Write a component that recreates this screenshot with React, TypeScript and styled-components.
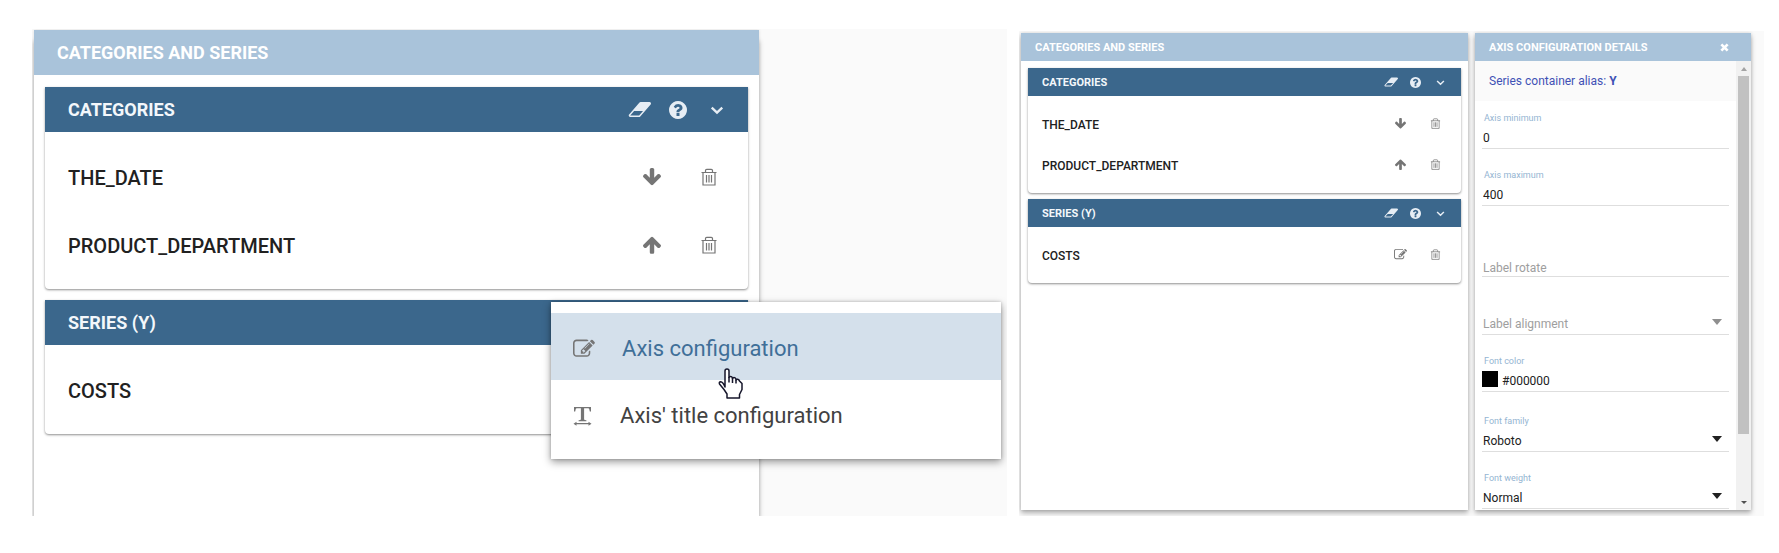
import React from 'react';
import styled, { createGlobalStyle, css } from 'styled-components';

type Size = 'large' | 'small';

const sizes = {
  large: {
    bar: 45, barPad: 23, title: 18, item: 20, row: 68, bodyTop: 11, bodyBottom: 10, pad: 11, gap: 11,
    figurePad: '1px 0 0 2px', panelHeight: 486,
    slot: 57, slotPad: 10, headGap: 39,
  },
  small: {
    bar: 28, barPad: 14, title: 11, item: 12, row: 41, bodyTop: 7, bodyBottom: 8, pad: 7, gap: 6,
    figurePad: '2px 13px 6px 2px', panelHeight: 477,
    slot: 35, slotPad: 8, headGap: 25,
  },
};

const Global = createGlobalStyle`
  *, *::before, *::after { box-sizing: border-box; }
  body { margin: 0; background: #fff; color: #212121; font-family: Roboto, "Liberation Sans", sans-serif; }
  button, input, select { font: inherit; color: inherit; }
`;

const Page = styled.main`
  display: grid;
  grid-template-columns: 975fr 745fr;
  gap: 12px;
  align-items: start;
  padding: 29px 15px 37px 32px;
`;

const Figure = styled.section<{ $size: Size }>`
  position: relative;
  display: flex;
  gap: 7px;
  padding: ${p => sizes[p.$size].figurePad};
  margin-top: ${p => (p.$size === 'small' ? 2 : 0)}px;
  background: #fafafa;
  overflow: hidden;
`;

const Panel = styled.div<{ $size: Size }>`
  flex: ${p => (p.$size === 'large' ? '0 0 74.5%' : '1')};
  min-width: 0;
  min-height: ${p => sizes[p.$size].panelHeight}px;
  background: #fff;
  box-shadow: 0 ${p => (p.$size === 'large' ? 11 : 3)}px 5px rgba(0, 0, 0, 0.3), 0 0 3px rgba(0, 0, 0, 0.12);
`;

const PanelBar = styled.header<{ $size: Size }>`
  display: flex;
  align-items: center;
  justify-content: space-between;
  height: ${p => sizes[p.$size].bar}px;
  padding: 0 ${p => sizes[p.$size].barPad}px;
  background: #a9c3da;
  color: #fff;
`;

const Title = styled.h2<{ $size: Size }>`
  margin: 0;
  font-size: ${p => sizes[p.$size].title}px;
  font-weight: 700;
  line-height: 1;
  white-space: nowrap;
`;

const Cards = styled.div<{ $size: Size }>`
  display: flex;
  flex-direction: column;
  gap: ${p => sizes[p.$size].gap}px;
  padding: ${p => sizes[p.$size].pad}px;
  padding-top: ${p => (p.$size === 'large' ? 12 : 7)}px;
`;

const CardBox = styled.article`
  position: relative;
  background: #fff;
  border-radius: 0 0 4px 4px;
  box-shadow: 0 1px 3px rgba(0, 0, 0, 0.22), 0 1px 2px rgba(0, 0, 0, 0.26);
`;

const CardBar = styled.header<{ $size: Size }>`
  display: flex;
  align-items: center;
  justify-content: space-between;
  height: ${p => sizes[p.$size].bar}px;
  padding: 0 ${p => (p.$size === 'large' ? 11 : 8)}px 0 ${p => sizes[p.$size].barPad}px;
  background: #3b678c;
  color: #f3f7fb;
`;

const Items = styled.ul<{ $size: Size }>`
  margin: 0;
  padding: ${p => sizes[p.$size].bodyTop}px ${p => sizes[p.$size].slotPad}px ${p => sizes[p.$size].bodyBottom}px ${p => sizes[p.$size].barPad}px;
  list-style: none;
`;

const Item = styled.li<{ $size: Size }>`
  display: flex;
  align-items: center;
  justify-content: space-between;
  height: ${p => sizes[p.$size].row}px;
  font-size: ${p => sizes[p.$size].item}px;
  font-weight: 500;
`;

const ItemName = styled.span`
  padding-top: 2px;
`;

const Actions = styled.div`
  display: flex;
  align-items: center;
`;

const IconButton = styled.button<{ $width: number; $color: string }>`
  display: flex;
  align-items: center;
  justify-content: center;
  width: ${p => p.$width}px;
  height: 28px;
  padding: 0;
  border: 0;
  background: none;
  color: ${p => p.$color};
  cursor: pointer;
`;

const Svg = styled.svg`
  display: block;
  fill: currentColor;
`;

const Menu = styled.div`
  position: absolute;
  top: 2px;
  left: 72%;
  width: 450px;
  padding: 11px 0 12px;
  background: #fff;
  box-shadow: 0 3px 8px rgba(0, 0, 0, 0.4), 0 0 3px rgba(0, 0, 0, 0.2);
  z-index: 1;
`;

const MenuItem = styled.button<{ $active?: boolean }>`
  display: flex;
  align-items: center;
  gap: 27px;
  width: 100%;
  height: 67px;
  padding: 4px 22px 0;
  border: 0;
  background: ${p => (p.$active ? '#d4e0eb' : '#fff')};
  color: ${p => (p.$active ? '#3f6f98' : '#424242')};
  font-size: 22px;
  text-align: left;
  cursor: pointer;

  svg { color: #757575; }
`;

const Pointer = styled.svg`
  position: absolute;
  top: 66px;
  left: 167px;
`;

const Details = styled.aside`
  display: flex;
  flex-direction: column;
  flex: 0 0 276px;
  height: 477px;
  background: #fff;
  box-shadow: 0 3px 5px rgba(0, 0, 0, 0.3), 0 0 3px rgba(0, 0, 0, 0.12);
`;

const DetailsBody = styled.div`
  display: flex;
  flex: 1;
  min-height: 0;
`;

const Form = styled.form`
  flex: 1;
  min-width: 0;
  overflow: hidden;
`;

const Alias = styled.p`
  display: flex;
  align-items: center;
  height: 40px;
  margin: 0 0 10px;
  padding: 0 14px;
  background: #fafafa;
  color: #3f51b5;
  font-size: 12px;
  white-space: pre;

  b { font-weight: 700; }
`;

const Field = styled.div<{ $height: number }>`
  display: flex;
  flex-direction: column;
  justify-content: flex-end;
  height: ${p => p.$height}px;
  margin: 0 7px;

  label {
    padding-left: 2px;
    color: #94b5d2;
    font-size: 9px;
    line-height: 12px;
  }
`;

const controlStyle = css`
  display: block;
  flex: 1;
  width: 100%;
  min-width: 0;
  height: 24px;
  padding: 3px 1px 0;
  border: 0;
  outline: 0;
  background: none;
  font-size: 12px;
`;

const Control = styled.div`
  display: flex;
  align-items: center;
  position: relative;
  border-bottom: 1px solid #dedede;
`;

const TextInput = styled.input<{ $compact?: boolean }>`
  ${controlStyle}
  ${p => p.$compact && 'height: 19px;'}
  &::placeholder { color: #9e9e9e; opacity: 1; }
`;

const Select = styled.select<{ $muted?: boolean }>`
  ${controlStyle}
  appearance: none;
  color: ${p => (p.$muted ? '#9e9e9e' : '#212121')};
`;

const Caret = styled.span<{ $muted?: boolean }>`
  position: absolute;
  right: 7px;
  border: solid transparent;
  border-width: 6px 5px 0;
  border-top-color: ${p => (p.$muted ? '#8f8f8f' : '#212121')};
  pointer-events: none;
`;

const Swatch = styled.span`
  width: 16px;
  height: 16px;
  margin-right: 3px;
  background: #000;
`;

const ScrollTrack = styled.div`
  display: flex;
  flex-direction: column;
  align-items: center;
  justify-content: space-between;
  width: 15px;
  padding: 6px 0;
  background: #f1f1f1;
`;

const Thumb = styled.div`
  flex: 0 0 358px;
  width: 11px;
  margin: 5px 0 auto;
  background: #c1c1c1;
`;

const ScrollArrow = styled.span<{ $down?: boolean }>`
  border: 3px solid transparent;
  ${p => (p.$down
    ? 'border-bottom-width: 0; border-top-color: #505050;'
    : 'border-top-width: 0; border-bottom-color: #a3a3a3; border-bottom-width: 4px;')}
`;

const paths = {
  help: 'M1024 1376v-192q0-14-9-23t-23-9h-192q-14 0-23 9t-9 23v192q0 14 9 23t23 9h192q14 0 23-9t9-23zm256-672q0-88-55.5-163t-138.5-116-170-41q-243 0-371 213-15 24 8 42l132 100q7 6 19 6 16 0 25-12 53-68 86-92 34-24 86-24 48 0 85.5 26t37.5 59q0 38-20 61t-68 45q-63 28-115.5 86.5t-52.5 125.5v36q0 14 9 23t23 9h192q14 0 23-9t9-23q0-19 21.5-49.5t54.5-49.5q32-18 49-28.5t46-35 44.5-48 28-60.5 12.5-81zm384 192q0 209-103 385.5t-279.5 279.5-385.5 103-385.5-103-279.5-279.5-103-385.5 103-385.5 279.5-279.5 385.5-103 385.5 103 279.5 279.5 103 385.5z',
  eraser: 'M960 1408l336-384h-768l-336 384h768zm1013-1077q15 34 9.5 71.5t-30.5 65.5l-896 1024q-38 44-96 44h-768q-38 0-69.5-20.5t-47.5-54.5q-15-34-9.5-71.5t30.5-65.5l896-1024q38-44 96-44h768q38 0 69.5 20.5t47.5 54.5z',
  edit: 'M888 1184l116-116-152-152-116 116v56h96v96h56zm440-720q-16-16-33 1l-350 350q-17 17-1 33t33-1l350-350q17-17 1-33zm80 594v190q0 119-84.5 203.5t-203.5 84.5h-832q-119 0-203.5-84.5t-84.5-203.5v-832q0-119 84.5-203.5t203.5-84.5h832q63 0 117 25 15 7 18 23 3 17-9 29l-49 49q-14 14-32 8-23-6-45-6h-832q-66 0-113 47t-47 113v832q0 66 47 113t113 47h832q66 0 113-47t47-113v-126q0-13 9-22l64-64q15-15 35-7t20 29zm-96-738l288 288-672 672h-288v-288zm444 132l-92 92-288-288 92-92q28-28 68-28t68 28l152 152q28 28 28 68t-28 68z',
  down: 'M1675 832q0 53-37 90l-651 652q-39 37-91 37-53 0-90-37l-651-652q-38-36-38-90 0-53 38-91l74-75q39-37 91-37 53 0 90 37l294 294v-704q0-52 38-90t90-38h128q52 0 90 38t38 90v704l294-294q37-37 90-37 52 0 91 37l75 75q37 39 37 91z',
};

const Eraser = ({ width }: { width: number }) => (
  <Svg width={width} height={width} viewBox="0 -96 1984 1984" aria-hidden><path d={paths.eraser} /></Svg>
);
const Help = ({ width }: { width: number }) => (
  <Svg width={width} height={width} viewBox="128 128 1536 1536" aria-hidden><path d={paths.help} /></Svg>
);
const Chevron = ({ width }: { width: number }) => (
  <Svg width={width} height={width} viewBox="0 0 12 12" aria-hidden>
    <path d="M1.500 4L6 8.300L10.500 4" fill="none" stroke="currentColor" strokeWidth="2" />
  </Svg>
);
const Edit = ({ width }: { width: number }) => (
  <Svg width={width} height={width} viewBox="0 0 1792 1792" aria-hidden><path d={paths.edit} /></Svg>
);
const Arrow = ({ width, up }: { width: number; up?: boolean }) => (
  <Svg width={width} height={width} viewBox="117 119 1558 1558" aria-hidden>
    <path d={paths.down} transform={up ? 'rotate(180 896 896)' : undefined} />
  </Svg>
);
const Trash = ({ width }: { width: number }) => (
  <Svg width={width} height={width} viewBox="0 0 18 18" aria-hidden>
    <path
      d="M1.500 4.500h15M5.500 4.500V2.500q0-1.200 1.200-1.200h4.600q1.200 0 1.200 1.200v2M3 4.500v12.500h12V4.500M6.500 7v7.500M9 7v7.500M11.500 7v7.500"
      fill="none" stroke="currentColor" strokeWidth="1.200"
    />
  </Svg>
);
const TitleIcon = () => (
  <Svg width="20" height="20" viewBox="0 0 20 20" aria-hidden>
    <path d="M1 1h17v4.500h-1.200l-.6-2.500q-.2-.7-1-.7h-4.100v10.900q0 .8 2.300 1v1H5.600v-1q2.300-.2 2.300-1V2.300H3.800q-.8 0-1 .7l-.6 2.500H1z" />
    <path d="M.5 17.700l3-2v1.400h12v-1.400l3 2-3 2v-1.400h-12v1.400z" />
  </Svg>
);
const Close = () => (
  <Svg width="9" height="9" viewBox="0 0 10 10" aria-hidden>
    <path d="M1.500 1.500l7 7M8.500 1.500l-7 7" stroke="currentColor" strokeWidth="3" />
  </Svg>
);

function HandPointer() {
  return (
    <Pointer width="25" height="32" viewBox="0 0 25 32" aria-hidden>
      <path
        d="M7 19V3q0-2 2-2t2 2v6.500q0-1 1.500-1t2 1.500v.5q.3-1 1.500-1t2 1.500v1q.3-1 1.700-.700t1.800 1.700l2.500 2.500v6l-2.500 5v3.500H9V26l-3-4.500L1.500 16q-.8-2 1.200-2.200Q5 14 7 19z"
        fill="#fff" stroke="#16162b" strokeWidth="1.500" strokeLinejoin="round"
      />
      <path d="M11 9v5.500M14.500 10v5M18 11.500v4" stroke="#16162b" strokeWidth="1.500" />
    </Pointer>
  );
}

type Entry = { name: string; action: 'down' | 'up' | 'edit' | 'none' };

function Card({ title, size, entries, children }: {
  title: string; size: Size; entries: Entry[]; children?: React.ReactNode;
}) {
  const s = sizes[size];
  const large = size === 'large';
  return (
    <CardBox>
      <CardBar $size={size}>
        <Title $size={size}>{title}</Title>
        <Actions>
          <IconButton type="button" $width={s.headGap} $color="#e6edf4" aria-label={`Clear ${title}`}>
            <Eraser width={large ? 23 : 14} />
          </IconButton>
          <IconButton type="button" $width={s.headGap} $color="#e6edf4" aria-label={`Help on ${title}`}>
            <Help width={large ? 18 : 11} />
          </IconButton>
          <IconButton type="button" $width={s.headGap} $color="#e6edf4" aria-label={`Collapse ${title}`}>
            <Chevron width={large ? 14 : 9} />
          </IconButton>
        </Actions>
      </CardBar>
      <Items $size={size}>
        {entries.map(e => (
          <Item key={e.name} $size={size}>
            <ItemName>{e.name}</ItemName>
            <Actions>
              {e.action !== 'none' && (
                <IconButton type="button" $width={s.slot} $color="#757575"
                  aria-label={e.action === 'edit' ? `Edit ${e.name}` : `Move ${e.name} ${e.action}`}>
                  {e.action === 'edit' ? <Edit width={13} /> : <Arrow width={large ? 18 : 11} up={e.action === 'up'} />}
                </IconButton>
              )}
              <IconButton type="button" $width={s.slot} $color="#757575" aria-label={`Remove ${e.name}`}>
                <Trash width={large ? 18 : 11} />
              </IconButton>
            </Actions>
          </Item>
        ))}
      </Items>
      {children}
    </CardBox>
  );
}

const categories: Entry[] = [
  { name: 'THE_DATE', action: 'down' },
  { name: 'PRODUCT_DEPARTMENT', action: 'up' },
];

function SeriesPanel({ size, costs, menu }: { size: Size; costs: Entry['action']; menu?: React.ReactNode }) {
  return (
    <Panel $size={size}>
      <PanelBar $size={size}><Title $size={size}>CATEGORIES AND SERIES</Title></PanelBar>
      <Cards $size={size}>
        <Card title="CATEGORIES" size={size} entries={categories} />
        <Card title="SERIES (Y)" size={size} entries={[{ name: 'COSTS', action: costs }]}>{menu}</Card>
      </Cards>
    </Panel>
  );
}

export default function App() {
  return (
    <>
      <Global />
      <Page>
        <Figure $size="large">
          <SeriesPanel
            size="large"
            costs="none"
            menu={
              <Menu role="menu">
                <MenuItem type="button" role="menuitem" $active><Edit width={22} />Axis configuration</MenuItem>
                <MenuItem type="button" role="menuitem"><TitleIcon />Axis' title configuration</MenuItem>
                <HandPointer />
              </Menu>
            }
          />
        </Figure>
        <Figure $size="small">
          <SeriesPanel size="small" costs="edit" />
          <Details>
            <PanelBar $size="small">
              <Title $size="small">AXIS CONFIGURATION DETAILS</Title>
              <IconButton type="button" $width={26} $color="#fff" aria-label="Close"><Close /></IconButton>
            </PanelBar>
            <DetailsBody>
              <Form>
                <Alias>Series container alias: <b>Y</b></Alias>
                <Field $height={38}>
                  <label htmlFor="axis-min">Axis minimum</label>
                  <Control><TextInput id="axis-min" defaultValue="0" /></Control>
                </Field>
                <Field $height={57}>
                  <label htmlFor="axis-max">Axis maximum</label>
                  <Control><TextInput id="axis-max" defaultValue="400" /></Control>
                </Field>
                <Field $height={71}>
                  <Control><TextInput $compact placeholder="Label rotate" aria-label="Label rotate" /></Control>
                </Field>
                <Field $height={58}>
                  <Control>
                    <Select $muted aria-label="Label alignment"><option>Label alignment</option></Select>
                    <Caret $muted />
                  </Control>
                </Field>
                <Field $height={57}>
                  <label htmlFor="font-color">Font color</label>
                  <Control><Swatch /><TextInput id="font-color" defaultValue="#000000" /></Control>
                </Field>
                <Field $height={60}>
                  <label htmlFor="font-family">Font family</label>
                  <Control><Select id="font-family"><option>Roboto</option></Select><Caret /></Control>
                </Field>
                <Field $height={57}>
                  <label htmlFor="font-weight">Font weight</label>
                  <Control><Select id="font-weight"><option>Normal</option></Select><Caret /></Control>
                </Field>
              </Form>
              <ScrollTrack aria-hidden>
                <ScrollArrow />
                <Thumb />
                <ScrollArrow $down />
              </ScrollTrack>
            </DetailsBody>
          </Details>
        </Figure>
      </Page>
    </>
  );
}
